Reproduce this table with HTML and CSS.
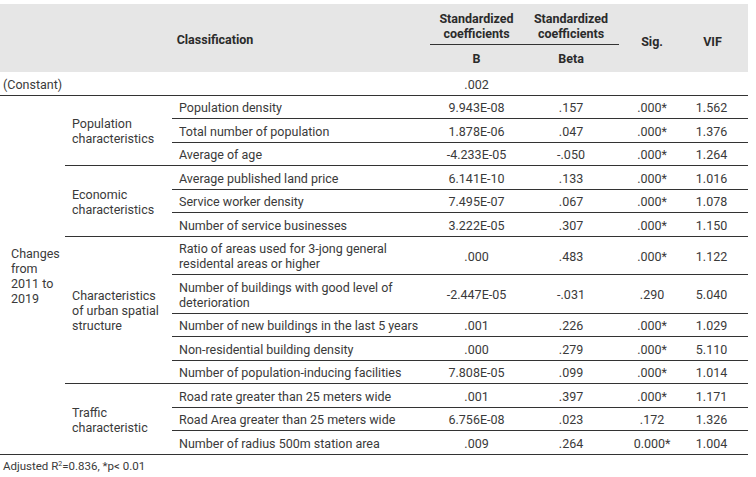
FILE: index.html
```html
<!DOCTYPE html>
<html>
<head>
<meta charset="utf-8">
<link rel="stylesheet" href="styles.css">
</head>
<body>
<table class="reg">
  <colgroup>
    <col class="c-chg"><col class="c-cat"><col class="c-var"><col class="c-b"><col class="c-beta"><col class="c-sig"><col class="c-vif">
  </colgroup>
  <thead>
    <tr class="h1">
      <th colspan="3" rowspan="2" class="cls">Classification</th>
      <th class="std">Standardized<br>coefficients</th>
      <th class="std">Standardized<br>coefficients</th>
      <th rowspan="2" class="sig">Sig.</th>
      <th rowspan="2" class="vif">VIF</th>
    </tr>
    <tr class="h2">
      <th>B</th>
      <th>Beta</th>
    </tr>
  </thead>
  <tbody>
    <tr class="r1">
      <td colspan="3" class="const bl">(Constant)</td>
      <td class="num bl">.002</td><td class="num bl"></td><td class="num bl"></td><td class="num vifv bl"></td>
    </tr>
    <tr class="r1">
      <td rowspan="14" class="chg bl">Changes<br>from<br>2011 to<br>2019</td>
      <td rowspan="3" class="cat bl">Population<br>characteristics</td>
      <td class="var bl">Population density</td>
      <td class="num bl">9.943E-08</td><td class="num bl">.157</td><td class="num bl">.000*</td><td class="num vifv bl">1.562</td>
    </tr>
    <tr class="r1">
      <td class="var bl">Total number of population</td>
      <td class="num bl">1.878E-06</td><td class="num bl">.047</td><td class="num bl">.000*</td><td class="num vifv bl">1.376</td>
    </tr>
    <tr class="r1">
      <td class="var bl">Average of age</td>
      <td class="num bl">-4.233E-05</td><td class="num bl">-.050</td><td class="num bl">.000*</td><td class="num vifv bl">1.264</td>
    </tr>
    <tr class="r1">
      <td rowspan="3" class="cat bl">Economic<br>characteristics</td>
      <td class="var bl">Average published land price</td>
      <td class="num bl">6.141E-10</td><td class="num bl">.133</td><td class="num bl">.000*</td><td class="num vifv bl">1.016</td>
    </tr>
    <tr class="r1">
      <td class="var bl">Service worker density</td>
      <td class="num bl">7.495E-07</td><td class="num bl">.067</td><td class="num bl">.000*</td><td class="num vifv bl">1.078</td>
    </tr>
    <tr class="r1">
      <td class="var bl">Number of service businesses</td>
      <td class="num bl">3.222E-05</td><td class="num bl">.307</td><td class="num bl">.000*</td><td class="num vifv bl">1.150</td>
    </tr>
    <tr class="r2">
      <td rowspan="5" class="cat bl">Characteristics<br>of urban spatial<br>structure</td>
      <td class="var bl">Ratio of areas used for 3-jong general<br>residental areas or higher</td>
      <td class="num bl">.000</td><td class="num bl">.483</td><td class="num bl">.000*</td><td class="num vifv bl">1.122</td>
    </tr>
    <tr class="r2b">
      <td class="var bl">Number of buildings with good level of<br>deterioration</td>
      <td class="num bl">-2.447E-05</td><td class="num bl">-.031</td><td class="num bl">.290</td><td class="num vifv bl">5.040</td>
    </tr>
    <tr class="r1">
      <td class="var bl">Number of new buildings in the last 5 years</td>
      <td class="num bl">.001</td><td class="num bl">.226</td><td class="num bl">.000*</td><td class="num vifv bl">1.029</td>
    </tr>
    <tr class="r1">
      <td class="var bl">Non-residential building density</td>
      <td class="num bl">.000</td><td class="num bl">.279</td><td class="num bl">.000*</td><td class="num vifv bl">5.110</td>
    </tr>
    <tr class="r1">
      <td class="var bl">Number of population-inducing facilities</td>
      <td class="num bl">7.808E-05</td><td class="num bl">.099</td><td class="num bl">.000*</td><td class="num vifv bl">1.014</td>
    </tr>
    <tr class="r1">
      <td rowspan="3" class="cat bl">Traffic<br>characteristic</td>
      <td class="var bl">Road rate greater than 25 meters wide</td>
      <td class="num bl">.001</td><td class="num bl">.397</td><td class="num bl">.000*</td><td class="num vifv bl">1.171</td>
    </tr>
    <tr class="r1">
      <td class="var bl">Road Area greater than 25 meters wide</td>
      <td class="num bl">6.756E-08</td><td class="num bl">.023</td><td class="num bl">.172</td><td class="num vifv bl">1.326</td>
    </tr>
    <tr class="r1">
      <td class="var bl">Number of radius 500m station area</td>
      <td class="num bl">.009</td><td class="num bl">.264</td><td class="num bl">0.000*</td><td class="num vifv bl">1.004</td>
    </tr>
  </tbody>
</table>
<p class="note">Adjusted R<sup>2</sup>=0.836, *p&lt; 0.01</p>
</body>
</html>
```
FILE: styles.css
```css
html, body {
  margin: 0;
  padding: 0;
  background: #ffffff;
}
body {
  padding-top: 4px;
  font-family: Roboto, "Liberation Sans", Arial, sans-serif;
  font-size: 12.5px;
  color: #3a3a3a;
}
.reg {
  width: 748px;
  table-layout: fixed;
  border-collapse: separate;
  border-spacing: 0;
}
.c-chg { width: 65px; }
.c-cat { width: 107px; }
.c-var { width: 258px; }
.c-b { width: 93px; }
.c-beta { width: 96px; }
.c-sig { width: 66px; }
.c-vif { width: 63px; }

.reg th {
  background: #e6e6e6;
  font-weight: bold;
  color: #2b2b2b;
  line-height: 15px;
  padding: 0;
  text-align: center;
  vertical-align: middle;
}
.h1 { height: 41px; }
.h2 { height: 27px; }
.reg th.std {
  border-bottom: 1px solid #333333;
  padding-top: 3px;
}
.reg th.cls { padding-top: 2px; }
.reg th.sig, .reg th.vif { padding-top: 6px; }
.reg th.vif { padding-right: 8px; }

.reg td {
  padding: 2px 0 0 0;
  line-height: 15px;
  vertical-align: middle;
  white-space: nowrap;
}
.r1 { height: 23.5px; }
.r2 { height: 38px; }
.r2b { height: 39px; }
.bl { border-bottom: 1px solid #333333; }
.reg td.const { padding-left: 3px; }
.reg td.chg { padding-left: 11px; }
.reg td.cat { padding-left: 7px; }
.reg td.var { padding-left: 7px; }
.num { text-align: center; }
.reg td.vifv { padding-right: 10px; }

.note {
  margin: 4px 0 0 3px;
  font-size: 11.5px;
  line-height: 14px;
  color: #3a3a3a;
}
.note sup {
  font-size: 7px;
  line-height: 0;
  vertical-align: 4px;
}
```
